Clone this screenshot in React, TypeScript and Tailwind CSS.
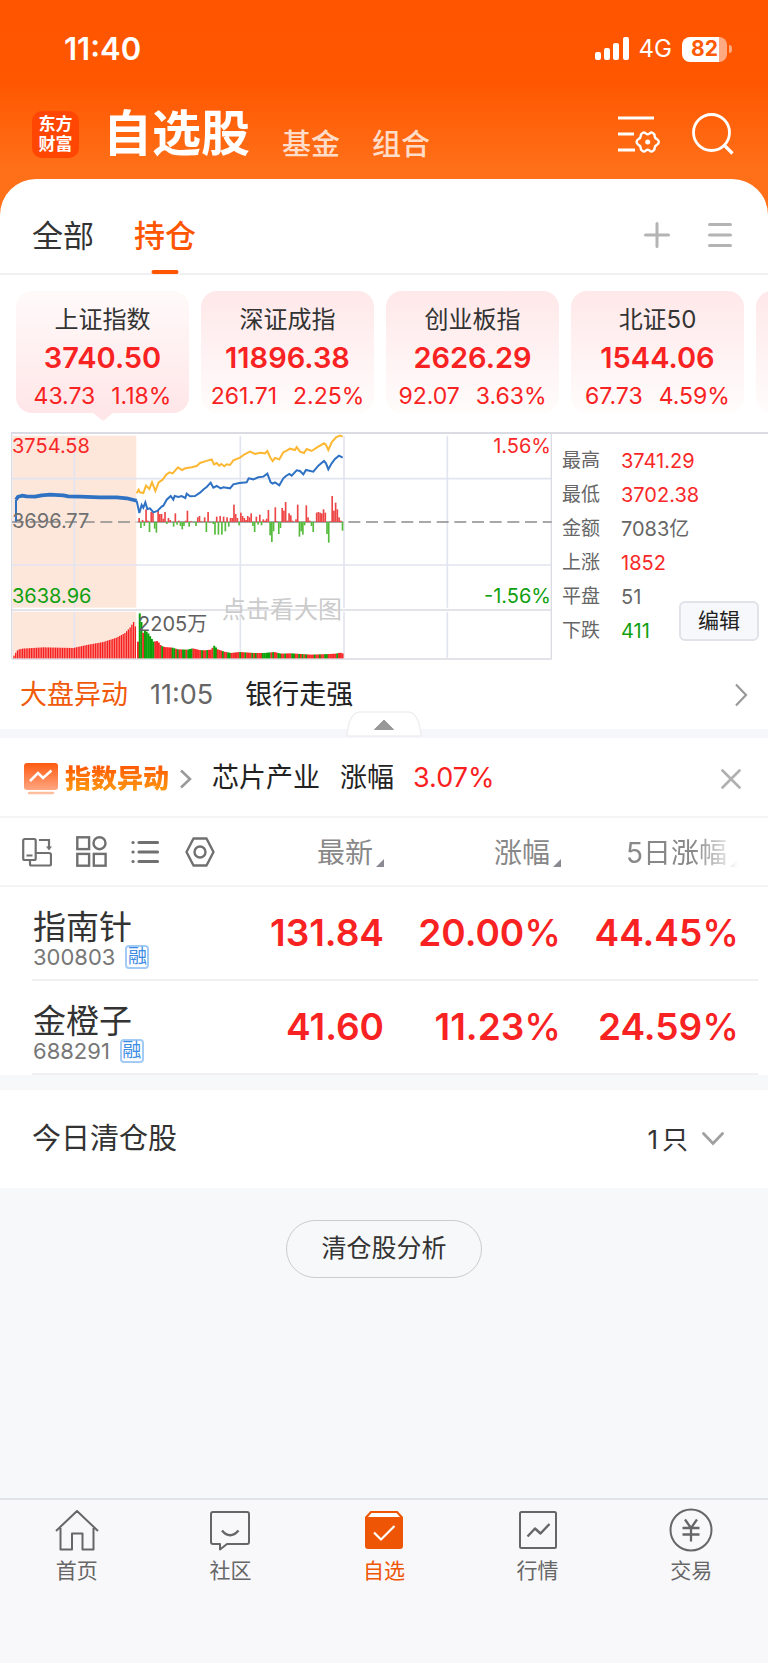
import { useState } from 'react';
import clsx from 'clsx';

const indices = [
  { name: '上证指数', price: '3740.50', change: '43.73', percent: '1.18%' },
  { name: '深证成指', price: '11896.38', change: '261.71', percent: '2.25%' },
  { name: '创业板指', price: '2626.29', change: '92.07', percent: '3.63%' },
  { name: '北证50', price: '1544.06', change: '67.73', percent: '4.59%' },
];

const marketStats = [
  { label: '最高', value: '3741.29', color: 'text-[#f82828]' },
  { label: '最低', value: '3702.38', color: 'text-[#f82828]' },
  { label: '金额', value: '7083亿', color: 'text-[#666]' },
  { label: '上涨', value: '1852', color: 'text-[#f82828]' },
  { label: '平盘', value: '51', color: 'text-[#666]' },
  { label: '下跌', value: '411', color: 'text-[#10a010]' },
];

const holdings = [
  { name: '指南针', code: '300803', price: '131.84', change: '20.00', fiveDay: '44.45' },
  { name: '金橙子', code: '688291', price: '41.60', change: '11.23', fiveDay: '24.59' },
];

// Chart space is 1623 x 681 units starting at (33, 27)
const leadLine =
  '410,205 416,194 420,202 430,204 438,182 448,192 456,172 466,198 476,172 488,164 498,150 508,142 518,145 534,127 546,135 556,130 575,127 590,123 600,114 615,109 635,103 642,118 650,114 658,122 664,117 673,124 680,118 690,120 700,106 720,98 735,87 750,80 765,87 780,83 795,85 802,78 812,100 818,108 825,99 838,103 850,82 860,77 870,71 885,75 890,66 900,80 912,84 920,72 935,78 950,68 972,55 978,60 985,75 995,52 1008,37 1020,32 1028,35';
const openingJump = '48,290 48,224';
const auctionLine =
  '48,224 54,215 66,212 80,214 105,215 125,211 150,209 190,211 205,214 240,215 300,217 350,217 380,220 410,227';
const indexLine =
  '410,227 418,264 425,240 430,248 436,232 442,252 450,250 460,262 472,258 485,245 490,242 500,224 512,213 520,224 524,213 535,216 545,213 556,219 560,206 570,214 585,213 600,203 612,192 620,186 632,173 640,188 650,183 662,190 670,187 690,190 700,178 718,174 740,172 746,160 760,163 775,157 790,155 802,146 812,172 818,176 825,172 838,181 850,160 858,153 868,147 875,152 890,136 900,138 910,148 918,135 940,140 955,122 972,108 978,115 985,133 995,115 1005,102 1017,92 1028,98';

const momentum = [
  12, -18, 6, -12, 38, 4, -30, 30, 28, -20, -32, 34, 24, 24, 10, 30, -6, 12, 6, 0, -14, 26, -8, 4, -12, -22, -12, 4, 34,
  -14, 2, 0, -2, -12, 14, 18, 2, 0, 14, -30, 30, -2, 0, -6, -38, 16, -38, 18, -38, 16, -28, 14, -14, 12, 12, 52, 24, 12,
  -10, 28, 18, 12, 6, 18, 14, 26, -12, -30, 16, -8, 22, -10, 8, 4, 10, 36, -40, -60, -28, 44, 2, -36, -18, 42, 34, 60,
  4, 26, 20, 4, 0, 8, 52, -44, -28, -38, -10, 50, 14, 4, -12, -30, 0, 28, 30, 28, 26, 38, 28, -36, -62, 2, 78, 34,
  58, 38, 14, 4, -26,
];

const volumeAnchors = [
  [42, 8], [48, 18], [54, 26], [66, 29], [130, 33], [220, 31], [260, 40], [310, 49], [350, 62], [375, 76], [390, 92],
  [404, 114], [411, 50], [416, 136], [422, 106], [427, 74], [433, 84], [443, 74], [450, 62], [458, 50], [470, 52],
  [480, 38], [490, 34], [515, 32], [530, 27], [560, 26], [575, 30], [595, 25], [610, 24], [630, 26], [640, 38],
  [650, 27], [670, 20], [690, 16], [715, 19], [760, 16], [790, 16], [820, 19], [840, 14], [870, 15], [900, 13],
  [930, 11], [960, 12], [985, 13], [1005, 14], [1018, 17], [1030, 13],
];

const tones =
  'rggrggggggrrrrgrrrrrggrgrrggrgggrrrrrgrrgrrrggrrrgrrggrrrrrgrrgrrrgrgrrrgggggrgrrggrrgrrrggrrgrgrgrrrrgrrgrrggrrrrrgr';

function volumeAt(x: number) {
  const next = volumeAnchors.findIndex(([ax]) => ax >= x);
  if (next <= 0) return volumeAnchors[0][1];
  const [x0, y0] = volumeAnchors[next - 1];
  const [x1, y1] = volumeAnchors[next];
  return y0 + ((y1 - y0) * (x - x0)) / (x1 - x0);
}

function MarketChart() {
  return (
    <svg viewBox="33 27 1623 681" preserveAspectRatio="none" className="block h-full w-full">
      <rect x="38" y="32" width="371" height="516" fill="#fde6da" />
      <rect x="38" y="560" width="371" height="140" fill="#fde6da" />
      <g stroke="#e2e5ef" strokeWidth="5" fill="none">
        <path d="M36 161H1655M36 420H1655" />
        <path d="M223 32V548M223 560V700M721 32V548M721 560V700M1032 32V548M1032 560V700M1342 32V548M1342 560V700" />
      </g>
      <g stroke="#dadbe3" strokeWidth="4" fill="none">
        <path d="M36 555H1655M36 702H1655M35 24V702M1654 24V702" />
      </g>
      <path d="M36 291H409M1045 291H1655" stroke="#8c8c8c" strokeWidth="5" strokeDasharray="36 17" />
      <path d="M412 291H1030" stroke="#8c8c8c" strokeWidth="4" />
      {momentum.map((v, i) => (
        <rect
          key={i}
          x={415 + i * 5.17}
          y={v > 0 ? 291 - v : 291}
          width="5"
          height={Math.abs(v)}
          fill={v > 0 ? '#ee4646' : '#55bb3c'}
        />
      ))}
      {Array.from({ length: 71 }, (_, i) => 40 + i * 5.2).map((x) => (
        <rect key={x} x={x} y={700 - volumeAt(x + 2)} width="4" height={volumeAt(x + 2)} fill="#f61e1e" />
      ))}
      {Array.from({ length: 119 }, (_, i) => 411 + i * 5.2).map((x, i) => (
        <rect
          key={x}
          x={x}
          y={700 - volumeAt(x)}
          width="6"
          height={volumeAt(x)}
          fill={tones[i] === 'g' ? '#0aa00a' : '#f62a2a'}
        />
      ))}
      <polyline points={leadLine} fill="none" stroke="#fdb833" strokeWidth="6" />
      <polyline points={openingJump} fill="none" stroke="#2f72c4" strokeWidth="6" />
      <polyline points={auctionLine} fill="none" stroke="#2f72c4" strokeWidth="11" strokeLinejoin="round" />
      <polyline points={indexLine} fill="none" stroke="#2f72c4" strokeWidth="6" />
    </svg>
  );
}

function StatusBar() {
  return (
    <div className="flex h-[98px] items-center pl-16 pr-9 text-white">
      <span className="text-[31px] font-semibold">11:40</span>
      <div className="ml-auto flex items-center">
        <svg width="34" height="24" viewBox="0 0 34 24" fill="currentColor">
          <rect x="0" y="15" width="6" height="8" rx="2" />
          <rect x="9" y="11" width="6" height="12" rx="2" />
          <rect x="18" y="6" width="6" height="17" rx="2" />
          <rect x="28" y="0" width="6" height="23" rx="2" />
        </svg>
        <span className="ml-[10px] text-2xl">4G</span>
        <div className="ml-[10px] flex h-[25px] w-[45px] items-center justify-center rounded-lg bg-[linear-gradient(90deg,#fff_82%,#ffaa82_82%)] text-[21px] font-bold text-[#ff5a05]">
          82
        </div>
        <div className="ml-[2px] h-2 w-[3px] rounded-r-full bg-white/50" />
      </div>
    </div>
  );
}

function Header() {
  return (
    <header className="bg-[linear-gradient(180deg,#ff5500_0px,#ff5600_80px,#ff7019_170px)] pb-[45px]">
      <StatusBar />
      <div className="flex h-[72px] items-center pl-8 pr-[34px]">
        <div className="flex size-[47px] flex-col items-center justify-center rounded-[10px] bg-[#ff4603] text-[17px] font-bold leading-5 text-white">
          <span>东方</span>
          <span>财富</span>
        </div>
        <nav className="ml-6 flex items-end">
          <a href="#stocks" className="text-[49px] font-bold leading-[74px] text-white">自选股</a>
          <a href="#funds" className="ml-8 text-[29px] font-medium leading-[52px] text-[#ffdcc8]">基金</a>
          <a href="#portfolio" className="ml-8 text-[29px] font-medium leading-[52px] text-[#ffdcc8]">组合</a>
        </nav>
        <button type="button" aria-label="设置" className="ml-auto text-white">
          <svg width="42" height="40" viewBox="0 0 42 40" fill="none" stroke="currentColor" strokeWidth="2.8">
            <path d="M0 4H36M0 20H16M0 36H17" />
            <path
              d="M25 18.700Q27 18.200 28 19.600Q29.700 21 31.400 19.600Q32.400 18.200 34.400 18.700Q37 20 36.600 22.200Q36.800 24.300 38.800 25Q40.800 26 40.800 28Q40.800 30 38.800 31Q36.800 31.700 36.600 33.800Q37 36 34.400 37.300Q32.400 37.800 31.400 36.400Q29.700 35 28 36.400Q27 37.800 25 37.300Q22.400 36 22.800 33.800Q22.600 31.700 20.600 31Q18.600 30 18.600 28Q18.600 26 20.600 25Q22.600 24.300 22.800 22.200Q22.400 20 25 18.700Z"
              strokeLinejoin="round"
              strokeWidth="2.4"
            />
            <circle cx="29.700" cy="28" r="2.500" fill="currentColor" stroke="none" />
          </svg>
        </button>
        <button type="button" aria-label="搜索" className="ml-8 text-white">
          <svg width="42" height="42" viewBox="0 0 42 42" fill="none" stroke="currentColor" strokeWidth="2.8">
            <circle cx="19.500" cy="19.500" r="18" />
            <path d="M31.500 31.500L40.500 40.500" strokeWidth="3.200" />
          </svg>
        </button>
      </div>
    </header>
  );
}

function GroupTabs() {
  const [active, setActive] = useState('持仓');

  return (
    <div className="flex h-24 items-center border-b-2 border-[#f0f0f2] pl-8 pr-9">
      {['全部', '持仓'].map((tab) => (
        <button
          key={tab}
          type="button"
          onClick={() => setActive(tab)}
          className={clsx(
            'relative mr-10 h-24 pt-5 text-[31px]',
            active === tab ? 'font-medium text-[#ff5500]' : 'text-[#333]',
          )}
        >
          {tab}
          {active === tab && <span className="absolute bottom-0 left-1/2 h-1 w-[27px] -translate-x-1/2 rounded-sm bg-[#ff5500]" />}
        </button>
      ))}
      <button type="button" aria-label="添加" className="ml-auto mt-[18px] text-[#b4b4b4]">
        <svg width="26" height="26" viewBox="0 0 26 26" stroke="currentColor" strokeWidth="3" strokeLinecap="round">
          <path d="M13 1.500V24.500M1.500 13H24.500" />
        </svg>
      </button>
      <button type="button" aria-label="菜单" className="ml-[38px] mt-[18px] text-[#b4b4b4]">
        <svg width="24" height="26" viewBox="0 0 24 26" stroke="currentColor" strokeWidth="3" strokeLinecap="round">
          <path d="M1.500 2.500H22.500M1.500 13H22.500M1.500 23.500H22.500" />
        </svg>
      </button>
    </div>
  );
}

function IndexCards() {
  return (
    <div className="flex gap-3 overflow-hidden pb-[19px] pl-4 pt-4">
      {indices.map((item, i) => (
        <button
          key={item.name}
          type="button"
          className={clsx(
            'relative h-[122px] w-[173px] shrink-0 whitespace-nowrap rounded-2xl pt-3 text-center text-[#f82222]',
            i === 0 ? 'bg-linear-to-b from-[#fffafa] to-[#ffe6e8]' : 'bg-linear-to-b from-[#ffe8e9] to-[#fffcfc]',
          )}
        >
          <div className="text-2xl leading-8 text-[#333]">{item.name}</div>
          <div className="text-[29px] font-semibold leading-[44px]">{item.price}</div>
          <div className="flex justify-center gap-4 text-[23px] leading-8">
            <span>{item.change}</span>
            <span>{item.percent}</span>
          </div>
          {i === 0 && (
            <svg width="20" height="8" viewBox="0 0 20 8" className="absolute left-1/2 top-full -translate-x-1/2">
              <path d="M0 0H20L10 8Z" fill="#ffe6e8" />
            </svg>
          )}
        </button>
      ))}
      <div className="h-[122px] w-[173px] shrink-0 rounded-2xl bg-linear-to-b from-[#ffe8e9] to-[#fffcfc]" />
    </div>
  );
}

function MarketPanel() {
  return (
    <div className="ml-[11px] flex">
      <div className="relative h-[229px] flex-1 border-t-2 border-[#dadbe3] text-xl leading-6">
        <MarketChart />
        <span className="absolute left-px top-0 text-[#f82828]">3754.58</span>
        <span className="absolute left-px top-[75px] text-[#707070]">3696.77</span>
        <span className="absolute left-px top-[150px] text-[#10a010]">3638.96</span>
        <span className="absolute right-px top-0 text-[#f82828]">1.56%</span>
        <span className="absolute right-px top-[150px] text-[#10a010]">-1.56%</span>
        <span className="absolute left-[127px] top-[178px] text-[#606060]">2205万</span>
        <span className="absolute left-[211px] top-[164px] text-2xl leading-6 text-[#cbcbcb]">点击看大图</span>
      </div>
      <div className="flex w-[216px] items-end border-t-2 border-[#dadbe3] pb-[13px] pl-[10px]">
        <dl className="grid w-[117px] shrink-0 grid-cols-[59px_auto] whitespace-nowrap text-[19px] leading-[34px]">
          {marketStats.map((row) => (
            <div key={row.label} className="contents">
              <dt className="text-[#666]">{row.label}</dt>
              <dd className={clsx('text-xl leading-[34px]', row.color)}>{row.value}</dd>
            </div>
          ))}
        </dl>
        <button type="button" className="relative mb-[7px] h-10 w-20 shrink-0 rounded-md border-2 border-[#e2e3ea] bg-[#f7f8fb] text-[21px] text-[#222]">
          编辑
        </button>
      </div>
    </div>
  );
}

function NewsRow() {
  return (
    <div className="relative border-b-[9px] border-[#f6f7fa]">
      <a href="#news" className="flex h-[68px] items-center px-5 text-[27px]">
        <span className="text-[#f05a0a]">大盘异动</span>
        <span className="ml-[22px] text-[#666]">11:05</span>
        <span className="ml-8 text-[#222]">银行走强</span>
        <svg width="13" height="24" viewBox="0 0 13 24" fill="none" stroke="#999" strokeWidth="2.200" className="ml-auto">
          <path d="M1 1.500L11 12L1 22.500" />
        </svg>
      </a>
      <button type="button" aria-label="收起" className="absolute -bottom-2 left-1/2 -translate-x-1/2">
        <svg width="76" height="26" viewBox="0 0 76 26">
          <path d="M1 25Q3 1 14 1H62Q73 1 75 25Z" fill="#fff" stroke="#efeff2" strokeWidth="1.500" />
          <path d="M38 9L47.500 18.500H28.500Z" fill="#999" stroke="#999" strokeLinejoin="round" />
        </svg>
      </button>
    </div>
  );
}

function AlertRow() {
  return (
    <div className="flex h-20 items-center border-b-2 border-[#f4f4f6] pl-6 pr-[27px] pt-[3px] text-[27px] text-[#222]">
      <svg width="34" height="32" viewBox="0 0 34 32" fill="none">
        <defs>
          <linearGradient id="alert" x1="0" y1="0" x2="0" y2="1">
            <stop offset="0" stopColor="#ff5a10" />
            <stop offset="1" stopColor="#ffa682" />
          </linearGradient>
        </defs>
        <rect width="34" height="27" rx="3" fill="url(#alert)" />
        <path d="M6 18L14 10L19 15L27.500 7.500" stroke="#fff" strokeWidth="2.500" />
        <path d="M5 30H29" stroke="#ffbf9f" strokeWidth="2.500" strokeLinecap="round" />
      </svg>
      <span className="ml-[7px] bg-linear-to-b from-[#ff5a05] from-20% to-[#ff9610] to-80% bg-clip-text text-[26px] font-black text-transparent">指数异动</span>
      <svg width="12" height="20" viewBox="0 0 12 20" fill="none" stroke="#999" strokeWidth="2.500" className="ml-[11px]">
        <path d="M1 1.500L10 10L1 18.500" />
      </svg>
      <span className="ml-5">芯片产业</span>
      <span className="ml-5">涨幅</span>
      <span className="ml-[19px] text-[#fa1e1e]">3.07%</span>
      <button type="button" aria-label="关闭" className="ml-auto text-[#b0b0b0]">
        <svg width="20" height="20" viewBox="0 0 20 20" stroke="currentColor" strokeWidth="2.600" strokeLinecap="round">
          <path d="M1.500 1.500L18.500 18.500M18.500 1.500L1.500 18.500" />
        </svg>
      </button>
    </div>
  );
}

function ViewTools() {
  return (
    <div className="flex items-center gap-6 pl-[22px] text-[#707070]">
      <button type="button" aria-label="横屏">
        <svg width="30" height="30" viewBox="0 0 30 30" fill="none" stroke="currentColor" strokeWidth="2.200">
          <rect x="1.200" y="2" width="12.500" height="21" rx="1.500" />
          <path d="M4.500 18.500H10.500M17 3H27V11M14 16H27Q29 16 29 17.500V27Q29 28.500 27.500 28.500H9.500Q8 28.500 8 27V23" />
          <path d="M24 9.500H30L27 13.500Z" fill="currentColor" stroke="none" />
        </svg>
      </button>
      <button type="button" aria-label="宫格">
        <svg width="31" height="31" viewBox="0 0 31 31" fill="none" stroke="currentColor" strokeWidth="2.400">
          <rect x="1.300" y="1.300" width="11.800" height="11.800" />
          <circle cx="23.500" cy="7.200" r="6" />
          <rect x="1.300" y="17.900" width="11.800" height="11.800" />
          <rect x="17.800" y="17.900" width="11.800" height="11.800" />
        </svg>
      </button>
      <button type="button" aria-label="列表">
        <svg width="30" height="24" viewBox="0 0 30 24" stroke="currentColor" strokeWidth="3.200" strokeLinecap="round">
          <path d="M2 2.500H2.100M2 12H2.100M2 21.500H2.100M8 2.500H26.500M8 12H26.500M8 21.500H26.500" />
        </svg>
      </button>
      <button type="button" aria-label="筛选">
        <svg width="30" height="30" viewBox="0 0 30 30" fill="none" stroke="currentColor" strokeWidth="2.400" strokeLinejoin="round">
          <path d="M8.500 1.500H21.500L28.500 15L21.500 28.500H8.500L1.500 15Z" />
          <circle cx="15" cy="15" r="5.500" />
        </svg>
      </button>
    </div>
  );
}

function SortButton({ label }: { label: string }) {
  return (
    <button type="button" className="inline-flex items-end whitespace-nowrap text-[28px] leading-10">
      {label}
      <svg width="8" height="8" viewBox="0 0 8 8" className="mb-[6px] ml-[3px]">
        <path d="M8 0V8H0Z" fill="#8a8a92" />
      </svg>
    </button>
  );
}

function Percent({ value }: { value: string }) {
  return (
    <>
      {value}
      <span className="font-medium">%</span>
    </>
  );
}

function HoldingsTable() {
  return (
    <table className="w-full table-fixed text-right">
      <thead>
        <tr className="h-[68px] border-b-2 border-[#f4f4f6] text-[#888]">
          <th className="p-0 text-left"><ViewTools /></th>
          <th className="w-[148px] p-0 pt-[3px] font-normal"><SortButton label="最新" /></th>
          <th className="w-[177px] p-0 pt-[3px] font-normal"><SortButton label="涨幅" /></th>
          <th className="w-[207px] p-0 pr-[30px] pt-[3px] font-normal">
            <div className="[mask-image:linear-gradient(90deg,#000_75%,transparent)]"><SortButton label="5日涨幅" /></div>
          </th>
        </tr>
      </thead>
      <tbody>
        {holdings.map((stock) => (
          <tr key={stock.code} className="text-[37px] font-semibold text-[#f82222]">
            <td className="p-0 text-left">
              <div className="ml-8 h-[94px] border-b-2 border-[#f0f0f3] pt-[22px] font-normal">
                <div className="pl-px text-[33px] leading-9 text-[#333]">{stock.name}</div>
                <div className="flex items-center gap-[10px] pl-px text-[22px] leading-6 text-[#777]">
                  {stock.code}
                  <span className="flex size-6 items-center justify-center rounded-sm border-2 border-[#a3cbf5] text-[19px] text-[#3c8ce4]">融</span>
                </div>
              </div>
            </td>
            <td className="p-0">
              <div className="h-[94px] border-b-2 border-[#f0f0f3] leading-[92px]">{stock.price}</div>
            </td>
            <td className="p-0">
              <div className="h-[94px] border-b-2 border-[#f0f0f3] leading-[92px]"><Percent value={stock.change} /></div>
            </td>
            <td className="p-0">
              <div className="mr-[10px] h-[94px] border-b-2 border-[#f0f0f3] pr-[19px] leading-[92px]"><Percent value={stock.fiveDay} /></div>
            </td>
          </tr>
        ))}
      </tbody>
    </table>
  );
}

function ClearedStocks() {
  return (
    <>
      <div className="mt-[15px] flex h-[98px] items-center bg-white pl-8 pr-11 text-[29px] text-[#333]">
        今日清仓股
        <button type="button" className="ml-auto flex items-center text-[26px]">
          <span>1</span>
          <span className="ml-1">只</span>
          <svg width="22" height="14" viewBox="0 0 22 14" fill="none" stroke="#a0a0a0" strokeWidth="2.800" strokeLinecap="round" className="ml-[14px]">
            <path d="M1.500 1.500L11 11.500L20.500 1.500" />
          </svg>
        </button>
      </div>
      <div className="flex justify-center py-8">
        <button type="button" className="h-[58px] rounded-full border border-[#ccc] px-[34px] text-[25px] text-[#333]">清仓股分析</button>
      </div>
    </>
  );
}

const iconProps = {
  width: 44,
  height: 44,
  viewBox: '0 0 44 44',
  fill: 'none',
  stroke: 'currentColor',
  strokeWidth: 2,
  strokeLinejoin: 'round' as const,
};

const navItems = [
  {
    label: '首页',
    icon: (
      <svg {...iconProps}>
        <path d="M1 23L22 3L43 23M5.500 20V41.500H17V25.500H27.500V41.500H38.500V20" />
      </svg>
    ),
  },
  {
    label: '社区',
    icon: (
      <svg {...iconProps}>
        <path d="M5 4H39Q41 4 41 6V34Q41 36 39 36H19L12 41.500V36H5Q3 36 3 34V6Q3 4 5 4Z" />
        <path d="M14 22.500Q22 32 30.500 22.500" strokeWidth="2.500" />
      </svg>
    ),
  },
  {
    label: '自选',
    icon: (
      <svg {...iconProps} stroke="none">
        <path d="M8.500 3H35.500L41 9V38Q41 41 38 41H6Q3 41 3 38V9Z" fill="#ee5504" />
        <path d="M9.500 5H34.500L38 9H6Z" fill="#fff" />
        <path d="M12 24.500L19 31.500L32.500 18" stroke="#fff" strokeWidth="2.200" />
      </svg>
    ),
  },
  {
    label: '行情',
    icon: (
      <svg {...iconProps}>
        <rect x="4" y="4" width="36" height="36" rx="1.500" />
        <path d="M11.500 28.500L19 20.500L24.500 25.500L33.500 16" strokeWidth="2.400" />
      </svg>
    ),
  },
  {
    label: '交易',
    icon: (
      <svg {...iconProps}>
        <circle cx="22" cy="22" r="20.500" />
        <path d="M16 11.500L22 20L28 11.500M13.500 20H30.500M13.500 26.500H30.500M22 20V33.500" strokeWidth="2.300" />
      </svg>
    ),
  },
];

function BottomNav() {
  return (
    <nav className="mt-auto grid h-[165px] grid-cols-5 border-t-2 border-[#e2e3e6] bg-[#f8f8fb] pt-2">
      {navItems.map((item) => (
        <a
          key={item.label}
          href={`#${item.label}`}
          className={clsx(
            'flex flex-col items-center gap-1 text-[21px] leading-[30px]',
            item.label === '自选' ? 'text-[#ee5504]' : 'text-[#666]',
          )}
        >
          {item.icon}
          {item.label}
        </a>
      ))}
    </nav>
  );
}

export default function App() {
  return (
    <div className="flex min-h-screen flex-col overflow-hidden bg-[#f7f8fa] font-['Inter','Noto_Sans_CJK_SC',sans-serif]">
      <Header />
      <main className="-mt-9">
        <div className="rounded-t-[36px] bg-white">
          <GroupTabs />
          <IndexCards />
          <MarketPanel />
          <NewsRow />
          <AlertRow />
          <HoldingsTable />
        </div>
        <ClearedStocks />
      </main>
      <BottomNav />
    </div>
  );
}
